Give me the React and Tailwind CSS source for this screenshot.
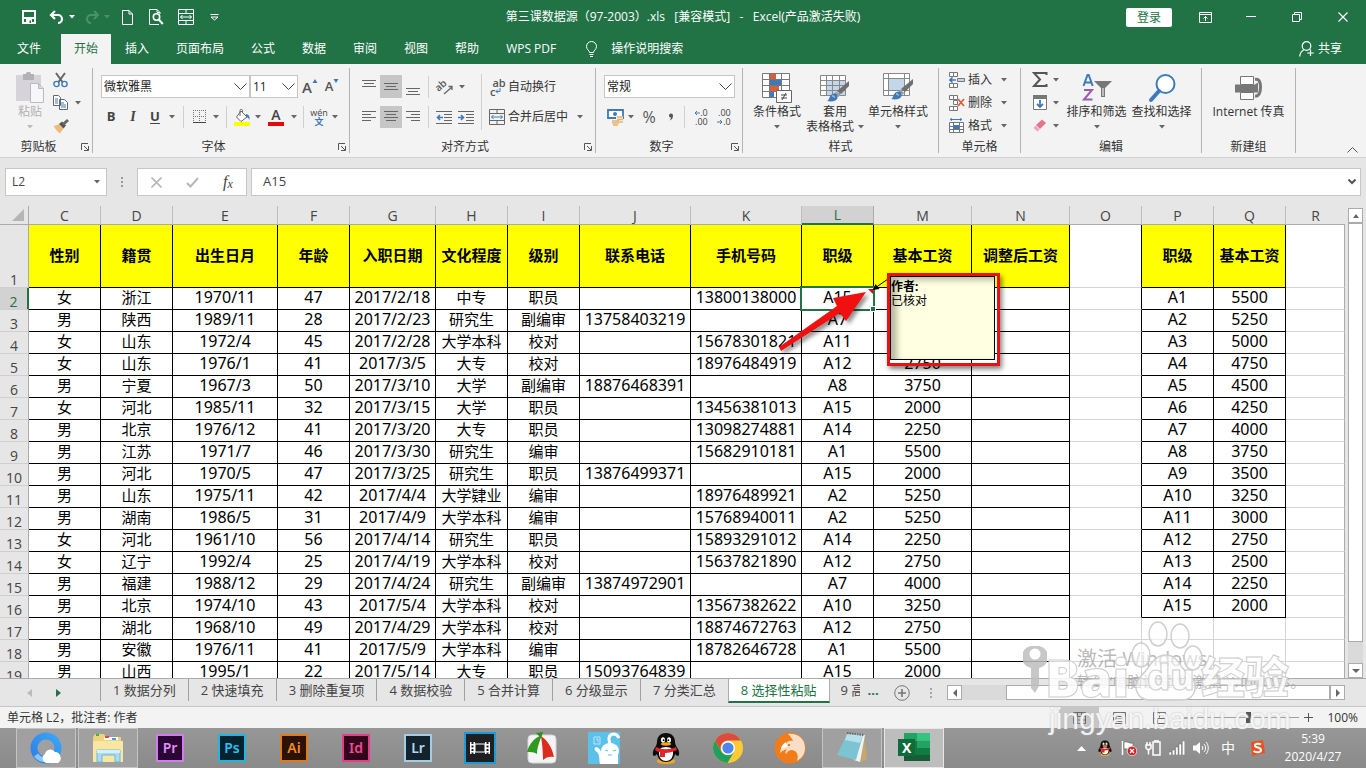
import React, { useState } from 'react';
import clsx from 'clsx';

const UI_FONT = "font-['Open_Sans','Noto_Sans_CJK_SC',sans-serif]";
const CELL_FONT = "font-['Noto_Sans','Noto_Sans_CJK_SC',sans-serif]";

const MENU_TABS = ['开始', '插入', '页面布局', '公式', '数据', '审阅', '视图', '帮助', 'WPS PDF'];

const COLUMNS = [
  { name: 'C', width: 'w-[72px]', title: '性别' },
  { name: 'D', width: 'w-[72px]', title: '籍贯' },
  { name: 'E', width: 'w-[105px]', title: '出生日月' },
  { name: 'F', width: 'w-[72px]', title: '年龄' },
  { name: 'G', width: 'w-[86px]', title: '入职日期' },
  { name: 'H', width: 'w-[72px]', title: '文化程度' },
  { name: 'I', width: 'w-[72px]', title: '级别' },
  { name: 'J', width: 'w-[111px]', title: '联系电话' },
  { name: 'K', width: 'w-[111px]', title: '手机号码' },
  { name: 'L', width: 'w-[72px]', title: '职级' },
  { name: 'M', width: 'w-[98px]', title: '基本工资' },
  { name: 'N', width: 'w-[98px]', title: '调整后工资' },
  { name: 'O', width: 'w-[72px]', title: '' },
  { name: 'P', width: 'w-[72px]', title: '职级' },
  { name: 'Q', width: 'w-[72px]', title: '基本工资' },
  { name: 'R', width: '', title: '' },
];

// C..M of rows 2-19
const STAFF = [
  ['女', '浙江', '1970/11', '47', '2017/2/18', '中专', '职员', '', '13800138000', 'A15', ''],
  ['男', '陕西', '1989/11', '28', '2017/2/23', '研究生', '副编审', '13758403219', '', 'A7', ''],
  ['女', '山东', '1972/4', '45', '2017/2/28', '大学本科', '校对', '', '15678301821', 'A11', ''],
  ['女', '山东', '1976/1', '41', '2017/3/5', '大专', '校对', '', '18976484919', 'A12', '2750'],
  ['男', '宁夏', '1967/3', '50', '2017/3/10', '大学', '副编审', '18876468391', '', 'A8', '3750'],
  ['女', '河北', '1985/11', '32', '2017/3/15', '大学', '职员', '', '13456381013', 'A15', '2000'],
  ['男', '北京', '1976/12', '41', '2017/3/20', '大专', '职员', '', '13098274881', 'A14', '2250'],
  ['男', '江苏', '1971/7', '46', '2017/3/30', '研究生', '编审', '', '15682910181', 'A1', '5500'],
  ['男', '河北', '1970/5', '47', '2017/3/25', '研究生', '职员', '13876499371', '', 'A15', '2000'],
  ['男', '山东', '1975/11', '42', '2017/4/4', '大学肄业', '编审', '', '18976489921', 'A2', '5250'],
  ['男', '湖南', '1986/5', '31', '2017/4/9', '大学本科', '编审', '', '15768940011', 'A2', '5250'],
  ['女', '河北', '1961/10', '56', '2017/4/14', '研究生', '职员', '', '15893291012', 'A14', '2250'],
  ['女', '辽宁', '1992/4', '25', '2017/4/19', '大学本科', '校对', '', '15637821890', 'A12', '2750'],
  ['男', '福建', '1988/12', '29', '2017/4/24', '研究生', '副编审', '13874972901', '', 'A7', '4000'],
  ['男', '北京', '1974/10', '43', '2017/5/4', '大学本科', '校对', '', '13567382622', 'A10', '3250'],
  ['男', '湖北', '1968/10', '49', '2017/4/29', '大学本科', '校对', '', '18874672763', 'A12', '2750'],
  ['男', '安徽', '1976/11', '41', '2017/5/9', '大学本科', '编审', '', '18782646728', 'A1', '5500'],
  ['男', '山西', '1995/1', '22', '2017/5/14', '大专', '职员', '15093764839', '', 'A15', '2000'],
];

const SALARIES = ['5500', '5250', '5000', '4750', '4500', '4250', '4000', '3750', '3500', '3250', '3000', '2750', '2500', '2250', '2000'];

const SHEETS = ['1 数据分列', '2 快速填充', '3 删除重复项', '4 数据校验', '5 合并计算', '6 分级显示', '7 分类汇总', '8 选择性粘贴'];

const Icon = ({ w = 16, h = 16, className, children }) => (
  <svg width={w} height={h} viewBox={`0 0 ${w} ${h}`} fill="none" className={clsx('shrink-0', className)} aria-hidden="true">
    {children}
  </svg>
);

const Caret = ({ className = 'text-[#666]' }) => (
  <Icon w={6} h={4} className={className}>
    <path d="M0 0h6L3 3.5z" fill="currentColor" />
  </Icon>
);

const Btn = ({ label, className, children }) => (
  <button type="button" aria-label={label} className={clsx('flex max-h-full shrink-0 items-center justify-center self-stretch', className)}>
    {children}
  </button>
);

const Sep = () => <div className="mx-1 h-[22px] w-px shrink-0 bg-[#d0d0d0]" />;

const Lines = ({ rows, top = 3 }) => (
  <Icon w={16} h={18}>
    {rows.map(([x, w], i) => (
      <path key={i} d={`M${x} ${top + i * 3 + 0.5}h${w}`} stroke="#666" />
    ))}
  </Icon>
);

/* ---------- title bar ---------- */

const MergeIcon = ({ stroke, arrow }) => (
  <Icon w={16} h={16}>
    <path d="M.5.5h15v15H.5zM.5 4.500h15M.5 11.500h15M8 .5v4M8 11.500v4" stroke={stroke} />
    <path d="M2.500 8h11M4.500 6l-2 2 2 2M11.500 6l2 2-2 2" stroke={arrow} />
  </Icon>
);

const TitleBar = () => (
  <div className="grid h-[34px] grid-cols-[1fr_auto_1fr] items-center text-xs text-white">
    <div className="flex h-full items-center pl-[14px]">
      <Btn label="保存" className="w-[30px]">
        <Icon w={14} h={14}>
          <path d="M1 1h12v12H1z" stroke="#fff" strokeWidth="2" />
          <path d="M1 7h12v2H1zM4 9h6v5H4z" fill="#fff" />
          <path d="M7.500 10.500h1.500v2.500H7.500z" fill="#217346" />
        </Icon>
      </Btn>
      <Btn label="撤消" className="w-[35px] gap-1">
        <Icon w={16} h={14}>
          <path d="M2 5h7a4 4 0 0 1 0 8M6 1L2 5l4 4" stroke="#fff" strokeWidth="2.200" />
        </Icon>
        <Caret className="text-white" />
      </Btn>
      <Btn label="恢复" className="w-[35px] gap-1">
        <Icon w={16} h={14}>
          <path d="M14 5H7a4 4 0 0 0 0 8M10 1l4 4-4 4" stroke="#4b9069" strokeWidth="2.200" />
        </Icon>
        <Caret className="text-[#4b9069]" />
      </Btn>
      <Btn label="新建" className="w-[26px]">
        <Icon w={11} h={15}>
          <path d="M.5.5h6.500l3.500 3.500v10.500H.5zM7 .5v3.500h3.500" stroke="#fff" />
        </Icon>
      </Btn>
      <Btn label="打印预览" className="w-8">
        <Icon w={15} h={16}>
          <path d="M10 15.500H.5V.5h7.500l3 3V5M8 .5v3h3" stroke="#fff" />
          <circle cx="7.500" cy="8" r="3.200" stroke="#fff" strokeWidth="1.600" />
          <path d="M9.800 10.500l4 4.500" stroke="#fff" strokeWidth="2" />
        </Icon>
      </Btn>
      <Btn label="合并后居中" className="w-7">
        <MergeIcon stroke="#fff" arrow="#fff" />
      </Btn>
      <Btn label="自定义快速访问工具栏" className="w-7">
        <Icon w={9} h={7}>
          <path d="M.5.5h8M1 3l3.500 3L8 3z" stroke="#fff" />
        </Icon>
      </Btn>
    </div>
    <h1 className="whitespace-pre leading-4">第三课数据源（97-2003）.xls   [兼容模式]   -   Excel(产品激活失败)</h1>
    <div className="flex h-full items-center justify-end">
      <button type="button" className="mr-[10px] h-[19px] w-[46px] rounded-[2px] bg-white leading-[19px] text-[#217346]">登录</button>
      <Btn label="功能区显示选项" className="w-[46px]">
        <Icon w={13} h={11}>
          <path d="M.5.5h12v10H.5zM.5 2.500h12M6.500 9V4.500M4.500 6.500l2-2 2 2" stroke="#fff" />
        </Icon>
      </Btn>
      <Btn label="最小化" className="w-[46px]">
        <Icon w={10} h={2}><path d="M0 .5h10" stroke="#fff" /></Icon>
      </Btn>
      <Btn label="还原" className="w-[46px]">
        <Icon w={10} h={10}><path d="M.5 2.500h7v7h-7zM2.500 2V.5h7v7H8" stroke="#fff" /></Icon>
      </Btn>
      <Btn label="关闭" className="w-[46px]">
        <Icon w={10} h={10}><path d="M.5.5l9 9M9.500.5l-9 9" stroke="#fff" strokeWidth="1.200" /></Icon>
      </Btn>
    </div>
  </div>
);

const MenuTabs = () => (
  <nav className="flex h-[30px] items-stretch text-xs text-white">
    <button type="button" className="mr-[3px] w-[58px]">文件</button>
    <div className="flex">
      {MENU_TABS.map(tab => (
        <button key={tab} type="button" className={clsx('mr-px px-[13px]', tab === '开始' && 'bg-[#f3f3f3] text-[#217346]')}>
          {tab}
        </button>
      ))}
    </div>
    <button type="button" className="ml-4 flex items-center gap-[14px]">
      <Icon w={11} h={16}>
        <path d="M3.500 11.500c0-2-3-3-3-6a5 5 0 0 1 10 0c0 3-3 4-3 6zM3.500 13.500h4M4 15.500h3" stroke="#fff" />
      </Icon>
      操作说明搜索
    </button>
    <button type="button" className="ml-auto mr-6 flex items-center gap-1">
      <Icon w={15} h={16}>
        <circle cx="7.500" cy="5" r="4.300" stroke="#fff" strokeWidth="1.200" />
        <path d="M.7 15.500c.3-3.500 2-5.500 4-6.500M11.500 8.500v6.500M8.200 12h6.600" stroke="#fff" strokeWidth="1.200" />
      </Icon>
      共享
    </button>
  </nav>
);

/* ---------- ribbon ---------- */

const Group = ({ label, launcher, className, children }) => (
  <section className={clsx('flex h-[85px] shrink-0 flex-col border-r border-[#b4b4b4]', className)}>
    <div className="flex flex-1">{children}</div>
    <div className="flex h-3 items-center leading-3">
      <span className="flex-1 text-center">{label}</span>
      {launcher && (
        <Btn label={`${label}设置`} className="w-[15px]">
          <Icon w={8} h={8}>
            <path d="M.5 7V.5H7M3 3l4 4M7.500 3v4.500H3" stroke="#555" />
          </Icon>
        </Btn>
      )}
    </div>
  </section>
);

const SelectBox = ({ label, value, className }) => (
  <label className={clsx('relative block h-[23px] shrink-0', className)}>
    <select aria-label={label} defaultValue={value} className="h-full w-full appearance-none border border-[#c6c6c6] bg-white pl-[2px] text-xs leading-5 text-[#222]">
      <option>{value}</option>
    </select>
    <Icon w={13} h={8} className="pointer-events-none absolute right-[3px] top-2">
      <path d="M.5.5l6 6 6-6" stroke="#444" />
    </Icon>
  </label>
);

const BigButton = ({ lines, className, caret = true, children }) => (
  <button type="button" className={clsx('flex shrink-0 flex-col items-center whitespace-nowrap pt-1 leading-[15px]', className)}>
    <span className="flex h-8 items-center">{children}</span>
    <span>{lines[0]}</span>
    <span className="flex h-[15px] items-center gap-1">
      {lines[1]}
      {caret && <Caret />}
    </span>
  </button>
);

const SmallButton = ({ label, text, children }) => (
  <button type="button" aria-label={label} className="flex h-[23px] items-center gap-[5px]">
    {children}
    {text && <span className="mr-1">{text}</span>}
    <Caret />
  </button>
);

const Brush = ({ x, y }) => (
  <g transform={`translate(${x} ${y})`}>
    <path d="M22 0v5l-8 8-4-3z" fill="#6f6f6f" />
    <path d="M9.500 10.500l4 3.500-2 2-4-3.500z" fill="#a0a0a0" />
    <path d="M7 12.500c3 0 4 2 3.500 4.500-.6 3-5 4-10.500 3 3-1 2-7 7-7.500z" fill="#3e7ab8" />
    <path d="M5 15c1.500-.5 2.500.5 2.300 1.600" stroke="#dce8f5" />
  </g>
);

const Clipboard = () => (
  <Group label="剪贴板" launcher className="w-[93px]">
    <button type="button" className="ml-[14px] flex w-[32px] flex-col items-center pt-1 leading-[15px] text-[#b1b1b1]">
      <Icon w={30} h={32}>
        <path d="M1 3h25v26H1z" fill="#d7d3da" />
        <path d="M8 2h3c0-3 5-3 5 0h3v6H8z" fill="#b3b1b5" />
        <path d="M15.500 11.500h8l5 5v14h-13zM23.500 11.500v5h5" fill="#f7f6f8" stroke="#bcb8bf" />
      </Icon>
      <span>粘贴</span>
      <span className="flex h-[15px] items-center"><Caret className="text-[#bbb]" /></span>
    </button>
    <div className="flex flex-col items-start pl-[7px]">
      <button type="button" aria-label="剪切" className="flex h-[23px] items-center">
        <Icon w={15} h={16}>
          <path d="M3 1l6.500 9M12 1L5.500 10" stroke="#666" strokeWidth="2" />
          <circle cx="3.500" cy="12" r="2.600" stroke="#3e7ab8" strokeWidth="1.400" />
          <circle cx="11.500" cy="12" r="2.600" stroke="#3e7ab8" strokeWidth="1.400" />
        </Icon>
      </button>
      <button type="button" aria-label="复制" className="flex h-[23px] items-center gap-[6px]">
        <Icon w={16} h={15}>
          <path d="M.5.5h5l2 2v8h-7zM6.500 4.500h5l3 3v7h-8z" fill="#fff" stroke="#666" />
          <path d="M2 4h3M2 6h3M2 8h3M8 8h3M8 10h5M8 12h5" stroke="#3e7ab8" />
        </Icon>
        <Caret />
      </button>
      <button type="button" aria-label="格式刷" className="flex h-[23px] items-center">
        <Icon w={16} h={16}>
          <path d="M.5 7.500c2 .5 4-.5 5.500-1.500l4.500 4.500-3.500 5C4.500 14 2 11 .5 7.500z" fill="#eebb7c" />
          <path d="M6 6l3-2.500 4 4-2.500 3z" fill="#555" />
          <path d="M10 6.500L15 2" stroke="#666" strokeWidth="3" />
        </Icon>
      </button>
    </div>
  </Group>
);

const FontGroup = () => (
  <Group label="字体" launcher className="w-[257px]">
    <div className="flex flex-col gap-2 pl-2 pt-[7px]">
      <div className="flex h-[23px]">
        <SelectBox label="字体" value="微软雅黑" className="w-[149px]" />
        <SelectBox label="字号" value="11" className="w-[48px]" />
        <Btn label="增大字号" className="w-6 text-[15px] font-semibold text-[#555]">
          A<Icon w={6} h={12} className="mb-1"><path d="M.5 4L3 0l2.500 4z" fill="#3e7ab8" /></Icon>
        </Btn>
        <Btn label="减小字号" className="w-5 text-[13px] font-semibold text-[#555]">
          A<Icon w={6} h={12} className="mb-1"><path d="M.5 0L3 4l2.500-4z" fill="#3e7ab8" /></Icon>
        </Btn>
      </div>
      <div className="flex h-[22px] items-center text-[13px] text-[#444]">
        <Btn label="加粗" className="w-5 font-bold">B</Btn>
        <Btn label="倾斜" className="w-6 font-['Liberation_Serif',serif] text-sm font-bold italic">I</Btn>
        <Btn label="下划线" className="w-5 font-bold underline underline-offset-2">U</Btn>
        <Btn label="下划线样式" className="w-[14px]"><Caret /></Btn>
        <Sep />
        <Btn label="边框" className="w-[22px]">
          <Icon w={13} h={14}>
            <path d="M.5 0v12M6.500 0v12M12.500 0v12M0 .5h13M0 6.500h13" stroke="#777" strokeDasharray="1 1" />
            <path d="M0 12.500h13" stroke="#444" strokeWidth="1" />
          </Icon>
        </Btn>
        <Btn label="边框样式" className="w-3"><Caret /></Btn>
        <Sep />
        <Btn label="填充颜色" className="w-[22px]">
          <Icon w={16} h={17}>
            <path d="M7 2l6 6-6 4.500L2.500 8z" fill="#fff" stroke="#666" />
            <path d="M6 7V1.500c0-1.500 2.500-1.500 2.500 0V3" stroke="#666" />
            <path d="M12 5c3 .5 4 3 3.500 6-1-2-2-3-3.500-3z" fill="#3e7ab8" />
            <path d="M0 13h16v4H0z" fill="#ffff00" />
          </Icon>
        </Btn>
        <Btn label="填充颜色选项" className="w-[10px]"><Caret /></Btn>
        <Btn label="字体颜色" className="w-[26px]">
          <span className="flex h-[17px] w-4 items-center justify-center border-b-4 border-[#e20a0a] text-sm font-semibold leading-3">A</span>
        </Btn>
        <Btn label="字体颜色选项" className="w-[10px]"><Caret /></Btn>
        <Sep />
        <Btn label="显示拼音" className="w-[22px] flex-col text-[9px] leading-[9px]">
          <span>wén</span>
          <span className="font-bold text-[#3e7ab8]">文</span>
        </Btn>
        <Btn label="拼音选项" className="w-[10px]"><Caret /></Btn>
      </div>
    </div>
  </Group>
);

const IndentIcon = ({ arrow }) => (
  <Icon w={16} h={14}>
    <path d="M0 1.500h16M8 4.500h8M8 7.500h8M8 10.500h8M0 13.500h16" stroke="#666" />
    <path d={arrow} stroke="#3e7ab8" strokeWidth="1.600" />
  </Icon>
);

const AlignGroup = () => (
  <Group label="对齐方式" launcher className="w-[246px]">
    <div className="flex flex-col gap-2 pl-2 pt-[7px]">
      <div className="flex h-[23px] items-center">
        <Btn label="顶端对齐" className="w-[22px]"><Lines rows={[[1, 14], [3, 10], [1, 14]]} top={2} /></Btn>
        <Btn label="垂直居中" className="w-[22px] bg-[#c6c6c6]"><Lines rows={[[1, 14], [3, 10], [1, 14]]} top={5} /></Btn>
        <Btn label="底端对齐" className="w-[22px]"><Lines rows={[[1, 14], [3, 10], [1, 14]]} top={10} /></Btn>
        <Sep />
        <Btn label="方向" className="w-[34px] gap-1">
          <Icon w={20} h={18}>
            <text x="2" y="10" fontSize="10" fontWeight="600" fill="#555" transform="rotate(-42 8 10)">ab</text>
            <path d="M9 16l8-7M13.500 8.500H17V12" stroke="#666" strokeWidth="1.300" />
          </Icon>
          <Caret />
        </Btn>
      </div>
      <div className="flex h-[22px] items-center">
        <Btn label="左对齐" className="w-[22px]"><Lines rows={[[1, 14], [1, 9], [1, 14], [1, 9]]} /></Btn>
        <Btn label="居中" className="w-[22px] bg-[#c6c6c6]"><Lines rows={[[1, 14], [3, 10], [1, 14], [3, 10]]} /></Btn>
        <Btn label="右对齐" className="w-[22px]"><Lines rows={[[1, 14], [6, 9], [1, 14], [6, 9]]} /></Btn>
        <Sep />
        <Btn label="减少缩进量" className="w-[22px]"><IndentIcon arrow="M7 7.500H1.500M4 5L1.500 7.500 4 10" /></Btn>
        <Btn label="增加缩进量" className="w-[22px]"><IndentIcon arrow="M0 7.500h5.500M3 5l2.500 2.500L3 10" /></Btn>
      </div>
    </div>
    <div className="mx-1 mt-[6px] h-14 w-px bg-[#d0d0d0]" />
    <div className="flex flex-col gap-2 pt-[7px]">
      <button type="button" className="flex h-[23px] items-center">
        <span className="flex w-[22px] flex-col pl-1 text-[11px] font-semibold leading-[9px] text-[#555]">
          <span>ab</span>
          <span className="flex items-center">c<Icon w={6} h={6}><path d="M5 0v3.500H1M3 1.500l-2 2 2 2" stroke="#3e7ab8" /></Icon></span>
        </span>
        自动换行
      </button>
      <button type="button" className="flex h-[22px] items-center">
        <span className="flex w-[22px] justify-center"><MergeIcon stroke="#666" arrow="#3e7ab8" /></span>
        合并后居中
        <span className="ml-[9px]"><Caret /></span>
      </button>
    </div>
  </Group>
);

const Decimal = ({ top, bottom, arrowTop }) => (
  <span className="flex flex-col text-[9px] leading-[9px] text-[#444]">
    <span className="flex items-center justify-end">
      {arrowTop && <Icon w={6} h={6}><path d="M6 3H1M3 1L1 3l2 2" stroke="#3e7ab8" /></Icon>}
      {top}
    </span>
    <span className="flex items-center justify-end">
      {!arrowTop && <Icon w={6} h={6}><path d="M0 3h5M3 1l2 2-2 2" stroke="#3e7ab8" /></Icon>}
      {bottom}
    </span>
  </span>
);

const NumberGroup = () => (
  <Group label="数字" launcher className="w-[147px]">
    <div className="flex flex-col gap-2 pl-2 pt-[7px]">
      <SelectBox label="数字格式" value="常规" className="w-[131px]" />
      <div className="flex h-[22px] items-center text-[#555]">
        <Btn label="会计数字格式" className="w-[22px]">
          <Icon w={17} h={17}>
            <path d="M1 1h15v8H1z" stroke="#3e7ab8" strokeWidth="1.800" fill="#fff" />
            <circle cx="8" cy="5" r="2" fill="#3e7ab8" />
            <path d="M9 7h7v7h-3v2H5v-6h4z" fill="#f3f3f3" />
            <path d="M10 8h6M10 10.500h6M5 12h7M5 14h7M6 16h5M12 13h4" stroke="#e9b36c" strokeWidth="1.500" />
          </Icon>
        </Btn>
        <Btn label="货币选项" className="w-[10px]"><Caret /></Btn>
        <Btn label="百分比样式" className="w-[26px] text-base">%</Btn>
        <Btn label="千位分隔样式" className="w-[18px]">
          <Icon w={6} h={8}><path d="M1 2.500a2 2 0 1 1 4 0C5 5 4 7 1.500 7.500 3 6 3 5 2.800 4.500 1.500 4.500 1 3.500 1 2.500z" fill="#555" /></Icon>
        </Btn>
        <Sep />
        <Btn label="增加小数位数" className="w-6"><Decimal top=".0" bottom=".00" arrowTop /></Btn>
        <Btn label="减少小数位数" className="w-[22px]"><Decimal top=".00" bottom=".0" /></Btn>
      </div>
    </div>
  </Group>
);

const StylesGroup = () => (
  <Group label="样式" className="w-[196px]">
    <BigButton lines={['条件格式']} className="ml-1 w-[60px]">
      <Icon w={30} h={30}>
        <path d="M.5.5h27v24H.5z" fill="#fff" />
        <path d="M8 0h6v6H8zM8 13h9v5H8z" fill="#d9603b" />
        <path d="M8 7h11v5H8zM8 19h4v6H8z" fill="#3e7ab8" />
        <path d="M.5.5h27v24H.5zM.5 6.500h27M.5 12.500h27M.5 18.500h27M7.500.5v24M19.500.5v18" stroke="#777" />
        <path d="M14.500 17.500h15v12h-15z" fill="#fff" stroke="#666" />
        <path d="M19 22h6M19 25h6M24 20l-4 7" stroke="#444" />
      </Icon>
    </BigButton>
    <BigButton lines={['套用', '表格格式']} className="w-[56px]">
      <Icon w={30} h={30}>
        <path d="M.5 2.500h25v20H.5z" fill="#fff" />
        <path d="M7 7h18v15H7z" fill="#c4d6ea" />
        <path d="M.5 2.500h25v20H.5zM.5 7.500h25M.5 12.500h25M.5 17.500h25M6.500 2.500v20M12.500 2.500v20M19.500 2.500v20" stroke="#888" />
        <Brush x="7" y="8" />
      </Icon>
    </BigButton>
    <BigButton lines={['单元格样式']} className="ml-px w-[68px]">
      <Icon w={30} h={30}>
        <path d="M.5.5h26v22H.5z" fill="#fff" />
        <path d="M6 6h15v11H6z" fill="#c4d6ea" />
        <path d="M.5.5h26v22H.5zM.5 5.500h26M.5 17.500h26M5.500.5v22M21.500.5v22" stroke="#888" />
        <Brush x="8" y="6" />
      </Icon>
    </BigButton>
  </Group>
);

const CellsGroup = () => (
  <Group label="单元格" className="w-[82px]">
    <div className="flex flex-col pl-[10px]">
      <SmallButton text="插入">
        <Icon w={16} h={16} className="-mr-0.5">
          <path d="M.5.5h4v4h-4zM4.500.5h4v4h-4zM.5 11.500h4v4h-4zM4.500 11.500h4v4h-4z" stroke="#777" fill="#fff" />
          <path d="M8.500 6.500h7v3h-7z" fill="#c4d6ea" stroke="#777" />
          <path d="M7 8H1M3.500 5.500L1 8l2.500 2.500" stroke="#3e7ab8" strokeWidth="1.600" />
        </Icon>
      </SmallButton>
      <SmallButton text="删除">
        <Icon w={16} h={16} className="-mr-0.5">
          <path d="M.5.5h4v4h-4zM4.500.5h4v4h-4zM.5 11.500h4v4h-4zM4.500 11.500h4v4h-4zM4.500 5.500h4v4h-4z" stroke="#777" fill="#fff" />
          <path d="M9 4l6 7M15 4l-6 7" stroke="#d9603b" strokeWidth="1.800" />
        </Icon>
      </SmallButton>
      <SmallButton text="格式">
        <Icon w={16} h={16} className="-mr-0.5">
          <path d="M1 1.500h12M3 .5l-2 1 2 1M11 .5l2 1-2 1" stroke="#3e7ab8" />
          <path d="M.5 4.500h14v10H.5zM.5 8.500h14M.5 11.500h14M4.500 4.500v10M10.500 4.500v10" stroke="#777" fill="#fff" />
          <path d="M4 7h6v4H4z" fill="#3e7ab8" />
        </Icon>
      </SmallButton>
    </div>
  </Group>
);

const EditGroup = () => (
  <Group label="编辑" className="w-[181px]">
    <div className="flex flex-col pl-[11px]">
      <SmallButton label="自动求和">
        <Icon w={16} h={15}>
          <path d="M14.500 3V1H2l6 6.500L2 14h12.500v-2" stroke="#555" strokeWidth="2" />
        </Icon>
      </SmallButton>
      <SmallButton label="填充">
        <Icon w={16} h={15}>
          <path d="M1.500.5h13v14h-13z" fill="#fff" stroke="#777" />
          <path d="M1 0h14v4H1z" fill="#777" />
          <path d="M8 5v7M5 9l3 3 3-3" stroke="#3e7ab8" strokeWidth="1.800" />
        </Icon>
      </SmallButton>
      <SmallButton label="清除">
        <Icon w={16} h={15}>
          <path d="M10 1.500l4 3.500-6 6-4-4z" fill="#e4748b" />
          <path d="M3.500 7.500l4 4-2 2-4-3.500z" fill="#eda7b5" />
        </Icon>
      </SmallButton>
    </div>
    <BigButton lines={['排序和筛选']} className="ml-auto w-[65px]">
      <Icon w={30} h={30}>
        <path d="M1.500 13L5.500 2h1.200l4 11M3 9.500h6.500" stroke="#3e7ab8" strokeWidth="2" />
        <path d="M2 17h8L2 26.500h8.500" stroke="#9a5bb0" strokeWidth="2" />
        <path d="M12 8h18l-7 7v9h-4v-9z" fill="#777" />
        <path d="M20.500 15h1v8h-1z" fill="#fff" />
      </Icon>
    </BigButton>
    <BigButton lines={['查找和选择']} className="mr-[7px] w-[65px]">
      <Icon w={28} h={30}>
        <circle cx="17.500" cy="11" r="9" stroke="#3e7ab8" strokeWidth="2" fill="#fff" />
        <path d="M11 18l-8 9" stroke="#3e7ab8" strokeWidth="4" strokeLinecap="round" />
      </Icon>
    </BigButton>
  </Group>
);

const NewGroup = () => (
  <Group label="新建组" className="w-[94px]">
    <BigButton lines={['Internet 传真']} caret={false} className="w-full">
      <Icon w={28} h={28}>
        <path d="M20 5.500c4-1 5.500 2 5.500 7.500s-1.500 9.500-5.500 9" stroke="#777" strokeWidth="3" />
        <path d="M0 10.500h20l3-2v10H0z" fill="#777" />
        <path d="M5.500 2.500h13v8h-13zM5.500 18.500h13v7h-13z" fill="#fff" stroke="#777" />
      </Icon>
    </BigButton>
  </Group>
);

const Ribbon = () => (
  <div className="flex h-[94px] border-b border-[#d2d2d2] bg-[#f3f3f3] pt-1 text-xs text-[#333]">
    <Clipboard />
    <FontGroup />
    <AlignGroup />
    <NumberGroup />
    <StylesGroup />
    <CellsGroup />
    <EditGroup />
    <NewGroup />
    <button type="button" aria-label="折叠功能区" className="mb-1 ml-auto mr-2 self-end">
      <Icon w={11} h={6}><path d="M.5 5.500l5-5 5 5" stroke="#555" /></Icon>
    </button>
  </div>
);

const FormulaBar = () => (
  <div className="flex h-12 items-center px-[5px] text-[13px] text-[#444]">
    <div className="flex h-7 w-[102px] items-center border border-[#c6c6c6] bg-white pr-[6px]">
      <input aria-label="名称框" defaultValue="L2" className="w-0 flex-1 pl-[6px] text-xs outline-none" />
      <Caret />
    </div>
    <Icon w={30} h={12}><path d="M15 1v2M15 5v2M15 9v2" stroke="#999" strokeWidth="2" /></Icon>
    <div className="mr-1 flex h-7 w-[110px] items-center border border-[#c6c6c6] bg-white">
      <Btn label="取消" className="flex-1"><Icon w={11} h={11}><path d="M.5.5l10 10M10.500.5l-10 10" stroke="#b8b8b8" strokeWidth="1.600" /></Icon></Btn>
      <Btn label="输入" className="flex-1"><Icon w={13} h={11}><path d="M1 6l3.500 3.500L12 1" stroke="#b8b8b8" strokeWidth="2" /></Icon></Btn>
      <Btn label="插入函数" className="flex-1 font-['Liberation_Serif',serif] text-base italic text-[#444]">
        f<span className="pt-1 text-xs">x</span>
      </Btn>
    </div>
    <div className="flex h-7 flex-1 items-center border border-[#c6c6c6] bg-white pr-1">
      <input aria-label="编辑栏" defaultValue="A15" className="w-0 flex-1 pl-[11px] outline-none" />
      <Icon w={8} h={6}><path d="M.5.5L4 4 7.500.5" stroke="#555" strokeWidth="2" /></Icon>
    </div>
  </div>
);

/* ---------- grid ---------- */

const hasHan = text => /[\u4e00-\u9fff]/.test(text);

// selection frame, comment box and the red marks that hang off cell L2
const CellMarks = () => (
  <>
    <div className="absolute -inset-0.5 z-10 border-2 border-[#217346]" />
    <div className="absolute -bottom-[3px] -right-[3px] z-10 size-[6px] border border-white bg-[#217346]" />
    <div className="absolute left-[85px] top-[-15px] z-20 h-[93px] w-[113px] border-[3px] border-[#e81212] shadow-[2px_3px_5px_rgba(0,0,0,0.5)]">
      <div className="mr-[2px] h-[84px] border border-black bg-[#ffffe1] pt-[3px] text-left text-xs leading-[14px] text-black shadow-[inset_6px_3px_6px_rgba(0,0,0,0.28)]">
        <p className="font-bold">作者:</p>
        <p>已核对</p>
      </div>
    </div>
    <svg width="120" height="84" viewBox="0 0 120 84" className="absolute -left-7 -top-3 z-20 max-w-none drop-shadow-[3px_3px_2px_rgba(0,0,0,0.45)]" aria-hidden="true">
      <path d="M92 16L59 22l4 8L5 71l2 4 59-38 6 8z" fill="#f01010" />
    </svg>
    <svg width="24" height="20" viewBox="0 0 24 20" className="absolute left-[66px] -top-3 z-10" aria-hidden="true">
      <path d="M20 3L7 12" stroke="#000" />
      <path d="M5 14l2.500-6 4 5z" fill="#000" />
      <path d="M0 13h5v5z" fill="#e00" />
    </svg>
  </>
);

const bodyCell = (row, col) => {
  const name = COLUMNS[col].name;
  const sideTable = name === 'P' || name === 'Q';
  const filled = col < 12 || (sideTable && row <= 16);
  const rightDark = filled || (name === 'O' && row <= 16);
  let text = '';
  if (col < 11) text = STAFF[row - 2][col];
  if (filled && name === 'P') text = `A${row - 1}`;
  if (filled && name === 'Q') text = SALARIES[row - 2];
  return (
    <td
      key={name}
      className={clsx(
        'h-[22px] overflow-visible whitespace-nowrap border-b border-r p-0 pb-0.5 leading-[19px]',
        hasHan(text) ? 'text-[15px]' : 'text-base leading-[19px]',
        filled ? 'border-b-black' : 'border-b-[#d4d4d4]',
        rightDark ? 'border-r-black' : name === 'R' ? 'border-r-[#ababab]' : 'border-r-[#d4d4d4]',
        name === 'L' && row === 2 && 'relative',
      )}
    >
      {text}
      {name === 'L' && row === 2 && <CellMarks />}
    </td>
  );
};

const Sheet = () => (
  <div className={clsx('min-w-0 flex-1 overflow-hidden', CELL_FONT)}>
    <table className="w-full table-fixed border-separate border-spacing-0 bg-white text-center text-black">
      <colgroup>
        <col className="w-[29px]" />
        {COLUMNS.map(col => <col key={col.name} className={col.width} />)}
      </colgroup>
      <thead>
        <tr className={clsx('bg-[#e6e6e6] text-sm text-[#444]', UI_FONT)}>
          <th aria-label="全选" className="h-[19px] border-b border-r border-[#ababab] p-0">
            <Icon w={12} h={12} className="ml-auto mr-1"><path d="M12 0v12H0z" fill="#b5b5b5" /></Icon>
          </th>
          {COLUMNS.map(col => (
            <th
              key={col.name}
              scope="col"
              className={clsx(
                'h-[19px] p-0 font-normal leading-[17px]',
                col.name === 'L' ? 'border-b-2 border-r border-b-[#217346] border-r-[#ababab] bg-[#d2d2d2] text-[#217346]' : 'border-b border-b-[#ababab]',
                col.name !== 'L' && col.name !== 'R' && 'border-r border-r-[#bdbdbd]',
              )}
            >
              {col.name}
            </th>
          ))}
        </tr>
      </thead>
      <tbody>
        <tr>
          <th scope="row" className={clsx('h-[63px] border-b border-r border-b-[#cfcfcf] border-r-[#ababab] bg-[#e6e6e6] p-0 align-bottom text-sm font-normal leading-[14px] text-[#444]', UI_FONT)}>1</th>
          {COLUMNS.map(col => (
            <td
              key={col.name}
              className={clsx(
                'h-[63px] whitespace-nowrap border-b border-r p-0 pb-0.5 text-[15px] font-bold',
                col.title ? 'border-black bg-[#ffff00]' : 'border-b-[#d4d4d4]',
                col.name === 'O' && 'border-r-black',
                col.name === 'R' && 'border-r-[#ababab]',
              )}
            >
              {col.title}
            </td>
          ))}
        </tr>
        {STAFF.map((_, i) => {
          const row = i + 2;
          return (
            <tr key={row}>
              <th
                scope="row"
                className={clsx(
                  'h-[22px] border-b border-b-[#cfcfcf] p-0 align-bottom text-sm font-normal leading-[14px]',
                  UI_FONT,
                  row === 2 ? 'border-r-2 border-r-[#217346] bg-[#d2d2d2] text-[#217346]' : 'border-r border-r-[#ababab] bg-[#e6e6e6] text-[#444]',
                )}
              >
                {row}
              </th>
              {COLUMNS.map((_col, c) => bodyCell(row, c))}
            </tr>
          );
        })}
      </tbody>
    </table>
  </div>
);

const ScrollButton = ({ label, d, className }) => (
  <button type="button" aria-label={label} className={clsx('flex h-[15px] w-[15px] shrink-0 items-center justify-center border border-[#ababab] bg-white', className)}>
    <Icon w={8} h={8}><path d={d} fill="#666" /></Icon>
  </button>
);

const VerticalScroll = () => (
  <div className="flex w-[21px] shrink-0 flex-col pl-[3px] pt-0.5">
    <ScrollButton label="向上滚动" d="M1 6l3-4 3 4z" />
    <div className="flex w-[15px] flex-1 flex-col bg-[#dadada]">
      <div className="mb-[21px] flex-1 border border-[#ababab] bg-white" />
    </div>
    <ScrollButton label="向下滚动" d="M0 2h8L4 6z" />
  </div>
);

const SheetTabs = ({ active, onSelect }) => (
  <div className="flex h-[29px] items-start border-b border-t border-b-[#c6c6c6] border-t-[#ababab] text-[13px] text-[#444]">
    <Btn label="上一张工作表" className="ml-[14px] w-[30px]"><Icon w={5} h={8}><path d="M5 0v8L0 4z" fill="#bbb" /></Icon></Btn>
    <Btn label="下一张工作表" className="w-[28px]"><Icon w={5} h={8}><path d="M0 0v8l5-4z" fill="#217346" /></Icon></Btn>
    <div className="ml-7 flex h-6 items-start">
      {SHEETS.map(name => (
        <button
          key={name}
          type="button"
          onClick={() => onSelect(name)}
          className={clsx(
            'border-l px-3 leading-[23px]',
            name === active ? 'h-6 border-b-2 border-r border-x-[#ababab] border-b-[#217346] bg-white text-[#217346]' : 'h-[22px] border-l-[#a0a0a0]',
          )}
        >
          {name}
        </button>
      ))}
      <button type="button" className="ml-[11px] w-[19px] overflow-hidden whitespace-nowrap text-left leading-[23px]">9 高</button>
      <button type="button" className="ml-2 font-bold leading-[23px] text-[#217346]">...</button>
    </div>
    <Btn label="新工作表" className="ml-[10px] w-[26px]">
      <Icon w={16} h={16}><circle cx="8" cy="8" r="7.300" stroke="#777" /><path d="M8 4v8M4 8h8" stroke="#777" strokeWidth="1.600" /></Icon>
    </Btn>
    <div className="ml-auto mr-[21px] flex h-full w-[416px] items-center">
      <Icon w={18} h={12}><path d="M2 1v2M2 5v2M2 9v2" stroke="#a5a5a5" strokeWidth="2" /></Icon>
      <ScrollButton label="向左滚动" d="M6 0v8L2 4z" />
      <div className="flex h-[15px] flex-1 bg-[#dadada] pl-[44px]">
        <div className="flex-1 border border-[#ababab] bg-white" />
      </div>
      <ScrollButton label="向右滚动" d="M2 0v8l4-4z" />
    </div>
  </div>
);

const StatusBar = () => (
  <footer className="flex h-[21px] items-center bg-[#f3f3f3] pl-[7px] pr-2 text-xs text-[#333]">
    <span className="flex-1">单元格 L2，批注者: 作者</span>
    <Btn label="普通" className="w-10 bg-[#c6c6c6]"><Icon w={13} h={12}><path d="M.5.5h12v11H.5zM.5 4.500h12M.5 8h12M4.500.5v11M8.500.5v11" stroke="#666" /></Icon></Btn>
    <Btn label="页面布局" className="w-10"><Icon w={13} h={12}><path d="M.5.5h12v11H.5zM3 2.500h7v7H3zM4.500 4.500h4M4.500 7h4" stroke="#666" /></Icon></Btn>
    <Btn label="分页预览" className="w-10"><Icon w={13} h={12}><path d="M.5.5h12v11H.5zM6.500.5v5M.5 6.500h12M4.500 6.500v5" stroke="#666" /></Icon></Btn>
    <Btn label="缩小" className="w-[18px]"><Icon w={9} h={2}><path d="M0 1h9" stroke="#555" /></Icon></Btn>
    <input
      type="range"
      aria-label="缩放级别"
      min="0"
      max="200"
      defaultValue="100"
      className="h-[11px] w-[102px] appearance-none bg-[linear-gradient(#a0a0a0,#a0a0a0)] bg-[length:100%_1px] bg-center bg-no-repeat [&::-webkit-slider-thumb]:h-[11px] [&::-webkit-slider-thumb]:w-[5px] [&::-webkit-slider-thumb]:appearance-none [&::-webkit-slider-thumb]:bg-[#555]"
    />
    <Btn label="放大" className="w-[18px]"><Icon w={9} h={9}><path d="M4.500 0v9M0 4.500h9" stroke="#555" /></Icon></Btn>
    <span className="w-[41px] text-right">100%</span>
  </footer>
);

/* ---------- taskbar ---------- */

const Penguin = ({ className }) => (
  <svg viewBox="0 0 28 32" className={clsx('shrink-0', className)} aria-hidden="true">
    <path d="M5 29c0-2 4-3 8-3s10 1 10 3-3 3-9 3-9-1-9-3z" fill="#f5a81c" />
    <path d="M14 1c-6 0-9 4-9 9 0 2-1 4-3 7-2 4-1 7 0 7s2-1 3-2c1 5 4 8 9 8s8-3 9-8c1 1 2 2 3 2s2-3 0-7c-2-3-3-5-3-7 0-5-3-9-9-9z" fill="#0c0c0c" />
    <path d="M14 15c-6 0-7 3-7 6 0 5 3 8 7 8s7-3 7-8c0-3-1-6-7-6z" fill="#fff" />
    <ellipse cx="11" cy="8" rx="2" ry="2.800" fill="#fff" />
    <ellipse cx="17" cy="8" rx="2" ry="2.800" fill="#fff" />
    <circle cx="11.600" cy="8.200" r=".9" fill="#000" />
    <circle cx="16.400" cy="8.200" r=".9" fill="#000" />
    <ellipse cx="14" cy="12" rx="5" ry="1.700" fill="#f5a81c" />
    <path d="M4 15c6 3 14 3 20 0l1 3c-4 2-8 3-12 3v4H8v-5c-2 0-3-1-5-2z" fill="#e3242b" />
  </svg>
);

const AdobeTile = ({ text, className }) => (
  <span className={clsx("flex size-7 items-center justify-center border-2 font-['Noto_Sans',sans-serif] text-sm font-semibold leading-none", className)}>{text}</span>
);

const BrowserIcon = () => (
  <Icon w={32} h={32}>
    <defs>
      <linearGradient id="ring" x1="0" y1="1" x2="1" y2="0">
        <stop offset="0" stopColor="#2f7fe6" />
        <stop offset="1" stopColor="#38a6f8" />
      </linearGradient>
    </defs>
    <circle cx="16" cy="16" r="12" stroke="url(#ring)" strokeWidth="7" fill="#a0a0a0" />
    <path d="M6 23a13 13 0 0 0 10 5" stroke="#8cc5fb" strokeWidth="5" />
    <path d="M16 31a5 5 0 0 1-1-9 5.500 5.500 0 0 1 10-2 6 6 0 0 1 3 11z" fill="#fff" />
  </Icon>
);

const FolderIcon = () => (
  <Icon w={32} h={32}>
    <path d="M1 5l2-3h9l2 3h15v24H1z" fill="#efd37a" />
    <path d="M4 2h3v2H4z" fill="#35b34a" />
    <path d="M12 5h14v3H12z" fill="#fff" />
    <path d="M13 4h4v2h-4z" fill="#e0493a" />
    <path d="M20 6h4v2h-4z" fill="#3f9fe0" />
    <path d="M1 9h30v21H1z" fill="#f8e7a3" />
    <path d="M5 18h23v12h-5v-7H10v7H5z" fill="#a9dcf2" stroke="#6fb6d8" />
    <path d="M5 18h23v3H5z" fill="#d6f0fb" />
  </Icon>
);

const FilmIcon = () => (
  <Icon w={32} h={32}>
    <path d="M1 1h30v30H1z" fill="#1d1f22" stroke="#1c9bd8" strokeWidth="2" />
    <path d="M6 10h5v12H6zM21 10h5v12h-5z" fill="#fff" />
    <path d="M11 12h10v8H11z" fill="#1d1f22" stroke="#fff" />
    <path d="M8.500 10v12M23.500 10v12" stroke="#1d1f22" strokeWidth="2" strokeDasharray="2 1.500" />
  </Icon>
);

const FastStoneIcon = () => (
  <Icon w={32} h={32}>
    <rect x="2" y="3" width="28" height="28" rx="4" fill="#f4f4f4" stroke="#d5d5d5" />
    <path d="M16 3C8 6 3 12 1 20c4 0 7 0 10 2 1-7 3-13 5-19z" fill="#2f9a1e" />
    <path d="M16 4c-3 6-5 12-5 18l6 6c0-8 0-16-1-24z" fill="#f8f8f8" />
    <path d="M15 4c6 4 11 11 13 21-4-1-8 0-11 3 0-9-1-17-2-24z" fill="#dd2c1e" />
    <path d="M10 1l7-1-2 6z" fill="#2e8f1c" />
  </Icon>
);

const RabbitIcon = () => (
  <Icon w={32} h={32}>
    <path d="M0 0h32v32H0z" fill="#5cc1e8" />
    <path d="M23 14c-3-6-3-11 2-12 3-.5 5 2 6 4" stroke="#fff" strokeWidth="3" />
    <ellipse cx="22" cy="19" rx="9" ry="8" fill="#fff" />
    <path d="M8 15c-2 1-2 3 1 5 3 3 2 8 3 12h18V22H14c-1-3-3-7-6-7z" fill="#fff" />
    <path d="M17 18l3 1M25 19l3-1M20 23h4" stroke="#5cc1e8" />
    <path d="M6 5h6v7H6zM8 7h2v3" stroke="#b7e6f8" />
  </Icon>
);

const ChromeIcon = () => (
  <Icon w={30} h={30}>
    <circle cx="15" cy="15" r="15" fill="#fccb33" />
    <path d="M15 0a15 15 0 0 1 13 7.500H15a7.500 7.500 0 0 0-6.500 11.200L2 7.500A15 15 0 0 1 15 0z" fill="#dd4b3e" />
    <path d="M2 7.500l6.500 11.200A7.500 7.500 0 0 0 21 19l-6.500 11A15 15 0 0 1 2 7.500z" fill="#1fa15d" />
    <circle cx="15" cy="15" r="7" fill="#fff" />
    <circle cx="15" cy="15" r="5.600" fill="#4b87ee" />
  </Icon>
);

const EagleIcon = () => (
  <Icon w={32} h={32}>
    <circle cx="16" cy="16" r="15.500" fill="#f07d1a" />
    <path d="M14 2c9-1 17 4 17 14 0 6-3 10-8 13 2-6 0-10-5-11-3 0-5 2-6 4-1-1-1-3 1-5-3 1-5 2-7 4 0-4 2-7 6-9 1-3 4-4 7-3-1-3-3-5-5-7z" fill="#f9ddc5" />
    <path d="M12 10c-3 2-5 4-5 7 2-1 4-2 6-2z" fill="#fff" />
    <circle cx="15" cy="13" r="1" fill="#c75a08" />
  </Icon>
);

const NotepadIcon = () => (
  <Icon w={32} h={32}>
    <path d="M28 3l3 24-7 3z" fill="#c9a66a" />
    <path d="M11 2l18 1-5 27-6-2z" fill="#f2f2f2" />
    <path d="M11 2l16 1-7 25L1 23z" fill="#7cc3d4" />
    <path d="M11 2l16 1-3 8-15-3z" fill="#b6e0ea" />
    <path d="M11 1l17 2" stroke="#666" strokeWidth="2" strokeDasharray="1.500 1" />
  </Icon>
);

const ExcelIcon = () => (
  <span className="relative flex h-8 w-9">
    <Icon w={36} h={32}>
      <path d="M8 1h13v7.500H8z" fill="#21a366" />
      <path d="M21 1h13v7.500H21z" fill="#33c481" />
      <path d="M8 8.500h13V16H8z" fill="#107c41" />
      <path d="M21 8.500h13V16H21z" fill="#21a366" />
      <path d="M8 16h26v7H8z" fill="#107c41" />
      <path d="M8 23h26v6H8z" fill="#185c37" />
      <path d="M2 7h17v17H2z" fill="#0f6b39" />
    </Icon>
    <span className="absolute left-[6px] top-2 text-sm font-bold leading-4 text-white">X</span>
  </span>
);

const TASKS = [
  { name: 'QQ浏览器', icon: <BrowserIcon />, open: true },
  { name: '资源管理器', icon: <FolderIcon />, open: true },
  { name: 'Premiere', icon: <AdobeTile text="Pr" className="border-[#d27af0] bg-[#2a0634] text-[#e38dff]" /> },
  { name: 'Photoshop', icon: <AdobeTile text="Ps" className="border-[#21b6e0] bg-[#06222e] text-[#27c3f0]" /> },
  { name: 'Illustrator', icon: <AdobeTile text="Ai" className="border-[#e07b1c] bg-[#2a1204] text-[#f58a22]" /> },
  { name: 'InDesign', icon: <AdobeTile text="Id" className="border-[#e43d8c] bg-[#33051a] text-[#f0489a]" /> },
  { name: 'Lightroom', icon: <AdobeTile text="Lr" className="border-[#a6cbe5] bg-[#13232e] text-[#b3d6ef]" /> },
  { name: '视频编辑', icon: <FilmIcon /> },
  { name: '截图', icon: <FastStoneIcon /> },
  { name: '抠图', icon: <RabbitIcon /> },
  { name: 'QQ', icon: <Penguin className="h-8 w-7" /> },
  { name: 'Chrome', icon: <ChromeIcon /> },
  { name: '猎豹', icon: <EagleIcon /> },
  { name: '记事本', icon: <NotepadIcon />, open: true },
  { name: 'Excel', icon: <ExcelIcon />, active: true },
];

const Taskbar = () => (
  <div className="flex h-10 items-stretch bg-[linear-gradient(#979797,#8a8a8a)] pl-[15px] text-white">
    {TASKS.map(task => (
      <div key={task.name} className="w-[62px] shrink-0 px-px">
        <button
          type="button"
          aria-label={task.name}
          className={clsx(
            'flex h-full w-full items-center justify-center border',
            task.open && 'border-[#c4c4c4] bg-[#a0a0a0]',
            task.active && 'border-[#e8e8e8] bg-[#bdbdbd]',
            !task.open && !task.active && 'border-transparent',
          )}
        >
          {task.icon}
        </button>
      </div>
    ))}
    <div className="ml-auto flex items-center pr-[11px]">
      <Btn label="显示隐藏的图标" className="w-6"><Icon w={9} h={5}><path d="M0 5l4.500-5L9 5z" fill="#fff" /></Icon></Btn>
      <Btn label="QQ" className="w-6"><Penguin className="h-4 w-4" /></Btn>
      <Btn label="操作中心" className="w-6">
        <Icon w={16} h={16}>
          <path d="M1.500 1v14" stroke="#fff" strokeWidth="1.500" />
          <path d="M3 2c4-1 5 2 9 1v7c-4 1-5-2-9-1z" fill="#fff" stroke="#555" strokeWidth=".6" />
          <circle cx="11" cy="11" r="4.800" fill="#d02424" stroke="#eee" strokeWidth=".8" />
          <path d="M9 9l4 4M13 9l-4 4" stroke="#fff" strokeWidth="1.400" />
        </Icon>
      </Btn>
      <Btn label="电源" className="w-6">
        <Icon w={16} h={16}>
          <path d="M8 2h7v13H8zM10 0h3v2h-3z" stroke="#fff" strokeWidth="1.500" />
          <path d="M1 5h5v3L4.500 9.500H2.500L1 8zM3.500 9.500v5M2 2v3M5 2v3" stroke="#fff" strokeWidth="1.500" />
        </Icon>
      </Btn>
      <Btn label="网络" className="w-6">
        <Icon w={16} h={14}>
          <path d="M0 11h2.500v3H0zM3.300 9h2.500v5H3.300zM6.600 6h2.500v8H6.600zM10 3h2.500v11H10zM13.300 0h2.500v14h-2.500z" fill="#fff" stroke="#555" strokeWidth=".4" />
        </Icon>
      </Btn>
      <Btn label="音量" className="w-6">
        <Icon w={16} h={14}>
          <path d="M0 4.500h3L7 1v12L3 9.500H0z" fill="#fff" />
          <path d="M9 5c1 1 1 3 0 4M11 3c2 2 2 6 0 8M13 1c3 3 3 9 0 12" stroke="#fff" />
        </Icon>
      </Btn>
      <Btn label="输入法" className="w-[30px] text-sm">中</Btn>
      <Btn label="搜狗输入法" className="w-7">
        <Icon w={16} h={16}>
          <path d="M2 2l12-2 2 13-13 3z" fill="#ec5220" />
          <path d="M12 4.500C10 3 5.500 3.500 6 6c.4 2 6 1.200 6 4 0 2.500-5 3-7.500 1" stroke="#fff" strokeWidth="2" />
        </Icon>
      </Btn>
      <div className="w-[84px] text-center text-xs leading-[18px]">
        <div>5:39</div>
        <div>2020/4/27</div>
      </div>
    </div>
  </div>
);

const Watermark = () => (
  <div className="pointer-events-none absolute bottom-[33px] right-[41px] z-30 h-[122px] w-[280px] select-none" aria-hidden="true">
    <div className="absolute left-[32px] top-[34px] whitespace-nowrap text-[#999]/70">
      <p className="text-xl leading-6">激活 Windows</p>
      <p className="text-[15px] leading-5">转到“电脑设置”以激活 Windows。</p>
    </div>
    <svg width="24" height="50" viewBox="0 0 24 50" className="absolute -left-[22px] top-[33px]">
      <path d="M12 0a11 11 0 0 1 4 22v18l-4 7-4-5V22a11 11 0 0 1 4-22z" fill="#bdbdbd" fillOpacity=".85" />
      <circle cx="12" cy="8" r="5.500" fill="#fff" />
    </svg>
    <svg width="90" height="82" viewBox="0 0 90 82" className="absolute left-[78px] top-[8px]">
      <g fill="#fff" fillOpacity=".55" stroke="#cfcfcf" strokeWidth="1.500">
        <ellipse cx="18" cy="34" rx="9" ry="12" />
        <ellipse cx="35" cy="13" rx="9" ry="12" />
        <ellipse cx="57" cy="15" rx="9" ry="12" />
        <ellipse cx="70" cy="37" rx="9" ry="12" />
        <path d="M43 34c12 0 14 13 24 21 10 9 5 24-8 24-8 0-24 0-32 0-13 0-19-14-9-24 9-8 12-21 25-21z" />
      </g>
    </svg>
    <div className="absolute left-0 top-[38px] flex items-center whitespace-nowrap font-extrabold leading-[52px] text-white/85 [-webkit-text-stroke:1px_#cccccc]">
      <span className="w-[102px] text-[52px]">Bai</span>
      <span className="w-[54px] text-4xl">du</span>
      <span className="text-[44px]">经验</span>
    </div>
    <p className="absolute left-1 top-[88px] font-['Liberation_Sans',sans-serif] text-3xl leading-9 text-white/85 [text-shadow:0_0_2px_#b0b0b0]">jingyan.baidu.com</p>
  </div>
);

export default function App() {
  const [activeSheet, setActiveSheet] = useState('8 选择性粘贴');

  return (
    <div className={clsx('relative flex h-screen flex-col overflow-hidden bg-[#e6e6e6]', UI_FONT)}>
      <header className="bg-[#217346]">
        <TitleBar />
        <MenuTabs />
      </header>
      <Ribbon />
      <FormulaBar />
      <main className="flex min-h-0 flex-1">
        <Sheet />
        <VerticalScroll />
      </main>
      <SheetTabs active={activeSheet} onSelect={setActiveSheet} />
      <StatusBar />
      <Taskbar />
      <Watermark />
    </div>
  );
}
